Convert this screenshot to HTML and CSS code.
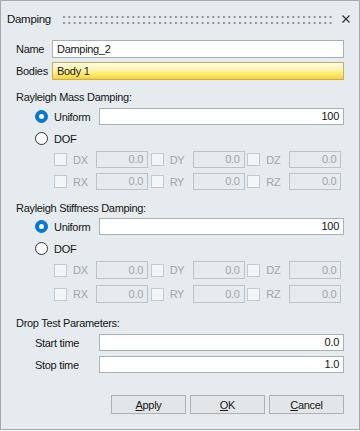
FILE: index.html
```html
<!DOCTYPE html>
<html>
<head>
<meta charset="utf-8">
<title>Damping</title>
<link rel="stylesheet" href="styles.css">
</head>
<body>
<div class="dialog">
  <div class="titlebar">
    <span class="title">Damping</span>
    <svg class="grip" width="269" height="9">
      <defs>
        <pattern id="dots" width="5.333" height="9" patternUnits="userSpaceOnUse">
          <rect x="0" y="1" width="2" height="2"></rect>
          <rect x="0" y="7" width="2" height="2"></rect>
        </pattern>
      </defs>
      <rect width="269" height="9" fill="url(#dots)"></rect>
    </svg>
    <svg class="close" viewBox="0 0 8 8"><path d="M0.5,0.5 L7.5,7.5 M7.5,0.5 L0.5,7.5"></path></svg>
  </div>

  <div class="content">
    <div class="row top">
      <label class="lbl">Name</label>
      <div class="field">Damping_2</div>
    </div>
    <div class="row top gap4">
      <label class="lbl">Bodies</label>
      <div class="field picked">Body 1</div>
    </div>

    <div class="heading first">Rayleigh Mass Damping:</div>
    <div class="row opt r-uni">
      <span class="radio on"></span><span class="optlbl">Uniform</span>
      <div class="field num">100</div>
    </div>
    <div class="row opt r-dof">
      <span class="radio"></span><span class="optlbl">DOF</span>
    </div>
    <div class="dofrow d1">
      <div class="dof"><span class="check"></span><span class="dlbl">DX</span><div class="field off">0.0</div></div>
      <div class="dof"><span class="check"></span><span class="dlbl">DY</span><div class="field off">0.0</div></div>
      <div class="dof"><span class="check"></span><span class="dlbl">DZ</span><div class="field off">0.0</div></div>
    </div>
    <div class="dofrow d2">
      <div class="dof"><span class="check"></span><span class="dlbl">RX</span><div class="field off">0.0</div></div>
      <div class="dof"><span class="check"></span><span class="dlbl">RY</span><div class="field off">0.0</div></div>
      <div class="dof"><span class="check"></span><span class="dlbl">RZ</span><div class="field off">0.0</div></div>
    </div>

    <div class="heading second">Rayleigh Stiffness Damping:</div>
    <div class="row opt r-uni2">
      <span class="radio on"></span><span class="optlbl">Uniform</span>
      <div class="field num">100</div>
    </div>
    <div class="row opt r-dof">
      <span class="radio"></span><span class="optlbl">DOF</span>
    </div>
    <div class="dofrow d3">
      <div class="dof"><span class="check"></span><span class="dlbl">DX</span><div class="field off">0.0</div></div>
      <div class="dof"><span class="check"></span><span class="dlbl">DY</span><div class="field off">0.0</div></div>
      <div class="dof"><span class="check"></span><span class="dlbl">DZ</span><div class="field off">0.0</div></div>
    </div>
    <div class="dofrow d4">
      <div class="dof"><span class="check"></span><span class="dlbl">RX</span><div class="field off">0.0</div></div>
      <div class="dof"><span class="check"></span><span class="dlbl">RY</span><div class="field off">0.0</div></div>
      <div class="dof"><span class="check"></span><span class="dlbl">RZ</span><div class="field off">0.0</div></div>
    </div>

    <div class="heading third">Drop Test Parameters:</div>
    <div class="row time t1">
      <label class="tlbl">Start time</label>
      <div class="field num">0.0</div>
    </div>
    <div class="row time t2">
      <label class="tlbl">Stop time</label>
      <div class="field num">1.0</div>
    </div>

    <div class="buttons">
      <button class="btn"><u>A</u>pply</button>
      <button class="btn"><u>O</u>K</button>
      <button class="btn"><u>C</u>ancel</button>
    </div>
  </div>
</div>
</body>
</html>
```

FILE: styles.css
```css
body{
  margin:0;
  background:#fff;
  font-family:"Liberation Sans",Arial,sans-serif;
  font-size:11px;
  letter-spacing:-0.3px;
  color:#161616;
}
.dialog{
  width:360px;
  height:430px;
  box-sizing:border-box;
  border:1px solid #a4abb0;
  background:#e5ebee;
}
.titlebar{
  height:35px;
  display:flex;
  align-items:center;
}
.title{
  margin-left:6px;
  font-size:11.5px;
  width:56px;
}
.grip{
  flex:none;
  margin-top:1px;
}
.grip rect{
  fill:#8f9396;
}
.grip > rect{
  fill:url(#dots);
}
.close{
  width:8px;
  height:8px;
  margin-left:10px;
  margin-top:1px;
}
.close path{
  stroke:#333;
  stroke-width:1.3;
  fill:none;
}
.content{
  padding:4px 15px 0 15px;
}
.row{
  display:flex;
  align-items:center;
}
.top{
  height:18px;
}
.gap4{
  margin-top:4px;
}
.lbl{
  width:36px;
}
.field{
  flex:1;
  box-sizing:border-box;
  height:100%;
  border:1px solid #abb0b4;
  background:#fff;
  padding:0 4px;
  display:flex;
  align-items:center;
  line-height:1;
}
.picked{
  background:linear-gradient(#fffbe6,#fff3a8 45%,#ffe14a 85%,#f6cf2a);
  border-color:#c5ae62;
}
.num{
  justify-content:flex-end;
}
.heading{
  height:14px;
  line-height:14px;
}
.first{
  margin-top:10px;
}
.second{
  margin-top:11px;
}
.third{
  margin-top:13px;
}
.opt{
  height:17px;
  padding-left:19px;
}
.r-uni{
  margin-top:4px;
}
.r-uni2{
  margin-top:3px;
}
.r-dof{
  margin-top:5px;
}
.optlbl{
  margin-left:6px;
  width:45px;
}
.radio{
  width:13px;
  height:13px;
  box-sizing:border-box;
  border:1px solid #333;
  border-radius:50%;
  background:#fff;
  position:relative;
}
.radio.on{
  border-color:#0078d7;
  background:#0078d7;
}
.radio.on::after{
  content:"";
  position:absolute;
  left:3px;
  top:3px;
  width:5px;
  height:5px;
  border-radius:50%;
  background:#fff;
}
.dofrow{
  display:flex;
  height:17px;
  padding-left:38px;
}
.d1{
  margin-top:4px;
}
.d2{
  margin-top:5px;
}
.d3{
  margin-top:4px;
  height:18px;
}
.d4{
  margin-top:6px;
  height:18px;
}
.dof{
  display:flex;
  align-items:center;
  width:98px;
}
.check{
  width:13px;
  height:13px;
  box-sizing:border-box;
  border:1px solid #c6c9cc;
  background:#f3f5f6;
}
.dlbl{
  margin-left:6px;
  width:23px;
  color:#a3a5a8;
}
.field.off{
  flex:none;
  width:52px;
  background:#e5ebee;
  border-color:#bfc3c6;
  color:#a0a4a9;
  justify-content:flex-end;
}
.time{
  height:17px;
  padding-left:19px;
}
.t1{
  margin-top:4px;
}
.t2{
  margin-top:5px;
}
.tlbl{
  width:64px;
}
.buttons{
  display:flex;
  justify-content:flex-end;
  gap:4px;
  margin-top:22px;
}
.btn{
  width:75px;
  height:19px;
  border:1px solid #adb1b5;
  background:#e3e6e8;
  font-family:"Liberation Sans",Arial,sans-serif;
  font-size:11px;
  letter-spacing:-0.3px;
  color:#161616;
  padding:0;
}
```
